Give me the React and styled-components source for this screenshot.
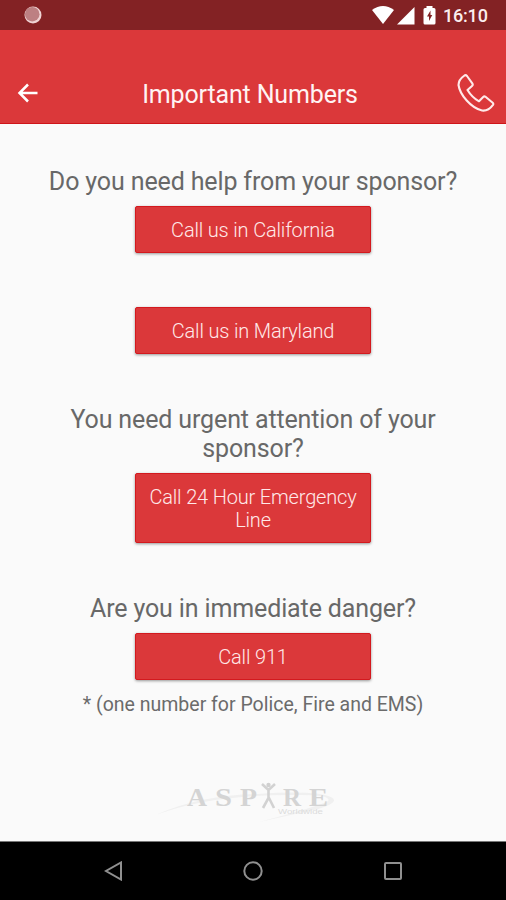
import styled, { createGlobalStyle } from 'styled-components';

const GlobalStyle = createGlobalStyle`
    * {
        box-sizing: border-box;
    }
    body {
        margin: 0;
        background: #fafafa;
        font-family: Roboto, "Liberation Sans", sans-serif;
    }
    h1, h2, p {
        margin: 0;
    }
`

const Screen = styled.div`
    display: flex;
    flex-direction: column;
    width: 506px;
    height: 900px;
    overflow: hidden;
    background: #fafafa;
`

const StatusBar = styled.div`
    display: flex;
    align-items: center;
    justify-content: space-between;
    height: 30px;
    padding: 0 18px 0 23px;
    background: #832224;
`

const StatusIcons = styled.div`
    display: flex;
    align-items: center;
`

const Clock = styled.span`
    margin-left: 7px;
    padding-top: 2px;
    width: 45px;
    color: #fbeeee;
    font-size: 18px;
    font-weight: 500;
    line-height: 20px;
    letter-spacing: -0.2px;
    white-space: nowrap;
`

const Header = styled.header`
    display: grid;
    grid-template-columns: 60px 1fr 60px;
    align-items: center;
    height: 94px;
    padding-top: 33px;
    background: #db383a;
    border-bottom: 1px solid #cf1519;
`

const HeaderButton = styled.button`
    display: flex;
    justify-content: ${(props) => props.$end ? 'flex-end' : 'flex-start'};
    padding: ${(props) => props.$end ? '0 11px 0 0' : '0 0 0 17px'};
    border: 0;
    background: none;
`

const Title = styled.h1`
    padding: 4px 6px 0 0;
    color: #fff3f3;
    font-size: 25px;
    font-weight: 400;
    line-height: 30px;
    text-align: center;
    letter-spacing: -0.15px;
`

const Content = styled.main`
    display: flex;
    flex-direction: column;
    align-items: center;
    height: 717px;
    padding-top: 43px;
`

const Section = styled.section`
    display: flex;
    flex-direction: column;
    align-items: center;
    margin-bottom: ${(props) => props.$gap || 0}px;
`

const Question = styled.h2`
    width: 430px;
    margin-bottom: 10px;
    color: #686868;
    font-size: 25px;
    font-weight: 400;
    line-height: 29px;
    text-align: center;
    letter-spacing: -0.13px;
`

const CallButton = styled.button`
    width: 236px;
    min-height: 47px;
    margin-bottom: ${(props) => props.$gap || 0}px;
    padding: 12px 10px 10px;
    border: 1px solid #d3191e;
    border-radius: 2px;
    background: #db383a;
    box-shadow: 0 1px 3px rgba(0, 0, 0, 0.4);
    color: #ffe9e9;
    font-family: inherit;
    font-size: 20px;
    font-weight: 300;
    line-height: 23px;
    letter-spacing: -0.17px;
`

const Note = styled.p`
    margin-top: 13px;
    color: #6b6b6b;
    font-size: 19.5px;
    line-height: 24px;
`

const NavBar = styled.nav`
    display: flex;
    align-items: center;
    justify-content: space-between;
    height: 59px;
    padding: 0 103px 0 104px;
    border-top: 1px solid #777;
    background: #000;
`

const Logo = () => (
    <svg width="190" height="50" viewBox="158 775 190 50">
        <path d="M156 815 Q200 795 258 794 Q315 790 331 797 Q341 802 318 809 L259 822 Q320 806 328 801 Q333 794 290 795 Q208 795 156 815Z" fill="#f0f0f0" />
        <g fill="#d4d4d4" fontFamily="Liberation Serif, serif" fontSize="25" fontWeight="700">
            <text x="187" y="806" textLength="20" lengthAdjust="spacingAndGlyphs">A</text>
            <text x="215" y="806" textLength="17" lengthAdjust="spacingAndGlyphs">S</text>
            <text x="240" y="806" textLength="17" lengthAdjust="spacingAndGlyphs">P</text>
            <text x="283" y="806">R</text>
            <text x="309" y="806" textLength="19" lengthAdjust="spacingAndGlyphs">E</text>
        </g>
        <circle cx="268.500" cy="785" r="2.200" fill="#d0d0d0" />
        <path d="M262 784 L268.500 790 L275 784 M268.500 790 V798 L263 808 M268.500 797 L274 808" fill="none" stroke="#d2d2d2" strokeWidth="2.600" />
        <text x="278" y="814" textLength="45" lengthAdjust="spacingAndGlyphs" fill="#dcdcdc" fontFamily="Liberation Sans, sans-serif" fontSize="7">Worldwide</text>
    </svg>
)

const App = () => {
    return (
        <Screen>
            <GlobalStyle />
            <StatusBar>
                <svg width="20" height="20" viewBox="0 0 20 20">
                    <circle cx="10" cy="10" r="8.500" fill="#f0d4d4" />
                    <circle cx="9.200" cy="9.200" r="7.300" fill="#bd8082" />
                </svg>
                <StatusIcons>
                    <svg width="64" height="20" viewBox="371 5 64 20">
                        <path d="M371 10 Q382 2 393 10 L382 24Z" fill="#fff" />
                        <path d="M413.500 7 V24.500 H396Z" fill="#fff" />
                        <path d="M425.500 6 H431.500 V8 H433 Q434.500 8 434.500 9.500 V23 Q434.500 24.500 433 24.500 H424 Q422.500 24.500 422.500 23 V9.500 Q422.500 8 424 8 H425.500Z" fill="#fff" />
                        <path d="M429.500 10.500 L426 16.500 H428 V21 L431.300 15 H429.500Z" fill="#832224" />
                    </svg>
                    <Clock>16:10</Clock>
                </StatusIcons>
            </StatusBar>

            <Header>
                <HeaderButton aria-label="Back">
                    <svg width="21" height="20" viewBox="0 0 21 20">
                        <path d="M20.500 10 H3 M11 1.500 L2.500 10 L11 18.500" fill="none" stroke="#fff" strokeWidth="2.500" />
                    </svg>
                </HeaderButton>
                <Title>Important Numbers</Title>
                <HeaderButton $end aria-label="Call">
                    <svg width="39" height="40" viewBox="456 73 39 40">
                        <path d="M464.500 75.500 Q458.500 79.500 458.500 85 C460 95 471 108 482 110.500 Q488 111.500 493 104.800 Q493.700 103.800 492.700 102.800 L485.500 96.800 Q484.300 96 483.200 97 L479 101.300 Q472 97.500 467.500 90 L472 86 Q473.300 84.800 472.300 83.300 L467 76 Q465.800 74.700 464.500 75.500Z" fill="none" stroke="#ffeaea" strokeWidth="2.100" strokeLinejoin="round" />
                    </svg>
                </HeaderButton>
            </Header>

            <Content>
                <Section $gap={51}>
                    <Question>Do you need help from your sponsor?</Question>
                    <CallButton $gap={54}>Call us in California</CallButton>
                    <CallButton>Call us in Maryland</CallButton>
                </Section>
                <Section $gap={51}>
                    <Question>You need urgent attention of your sponsor?</Question>
                    <CallButton>Call 24 Hour Emergency Line</CallButton>
                </Section>
                <Section $gap={58}>
                    <Question>Are you in immediate danger?</Question>
                    <CallButton>Call 911</CallButton>
                    <Note>* (one number for Police, Fire and EMS)</Note>
                </Section>
                <Logo />
            </Content>

            <NavBar>
                <svg width="19" height="20" viewBox="0 0 19 20">
                    <path d="M17 1.500 V18.500 L2 10Z" fill="none" stroke="#909090" strokeWidth="2" />
                </svg>
                <svg width="20" height="20" viewBox="0 0 20 20">
                    <circle cx="10" cy="10" r="8.700" fill="none" stroke="#909090" strokeWidth="2" />
                </svg>
                <svg width="20" height="20" viewBox="0 0 20 20">
                    <rect x="2" y="2" width="16" height="16" rx="1" fill="none" stroke="#909090" strokeWidth="2" />
                </svg>
            </NavBar>
        </Screen>
    )
}

export default App
